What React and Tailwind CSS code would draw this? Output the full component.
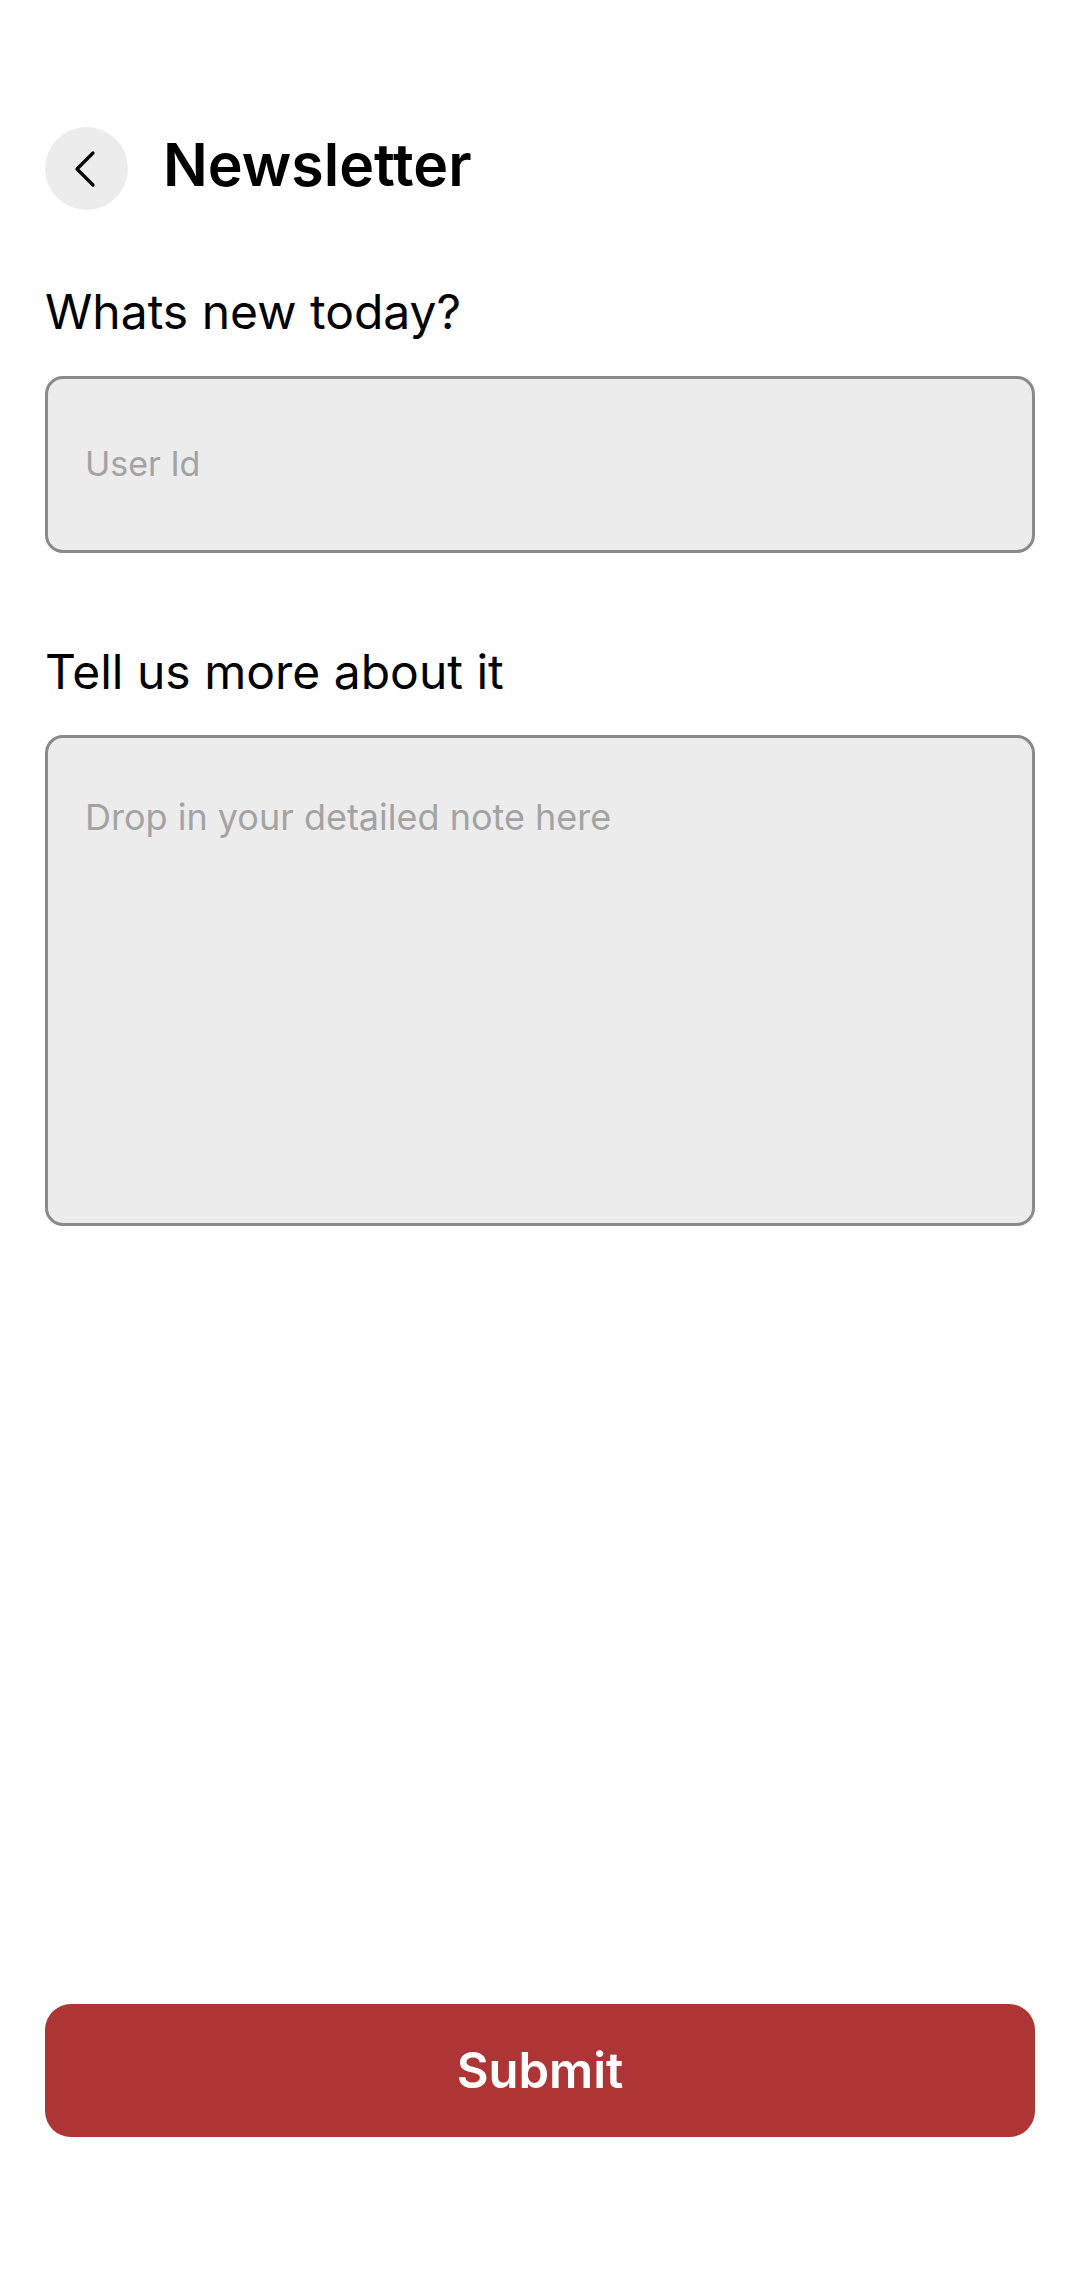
import { ChevronLeft } from 'lucide-react'

export default function App() {
  return (
    <div
      className="min-h-[2290px] w-full bg-white flex flex-col px-[45px] text-black"
      style={{ fontFamily: 'Inter, "Noto Sans", sans-serif' }}
    >
      {/* Header */}
      <div className="flex items-center gap-[35px] pt-[127px]">
        <button className="w-[83px] h-[83px] rounded-full bg-[#ececec] grid place-items-center shrink-0">
          <ChevronLeft size={64} strokeWidth={1.2} className="text-black -ml-[4px]" />
        </button>
        <h1 className="text-[59px] font-semibold leading-none -mt-[8px]">Newsletter</h1>
      </div>

      {/* Field 1 */}
      <label className="mt-[74px] text-[48px] leading-[56px]">Whats new today?</label>
      <div className="mt-[36px] h-[177px] rounded-[18px] border-[3px] border-[#8a8a8a] bg-[#ececec] flex items-center px-[37px]">
        <span className="text-[34px] text-[#a3a3a3] -mt-[3px]">User Id</span>
      </div>

      {/* Field 2 */}
      <label className="mt-[91px] text-[48px] leading-[56px]">Tell us more about it</label>
      <div className="mt-[35px] h-[491px] rounded-[18px] border-[3px] border-[#8a8a8a] bg-[#ececec] px-[37px] pt-[52px]">
        <span className="text-[36px] text-[#a3a3a3]">Drop in your detailed note here</span>
      </div>

      {/* Submit */}
      <div className="mt-auto pb-[153px]">
        <button className="w-full h-[133px] rounded-[26px] bg-[#ae3535] text-white text-[49px] font-semibold">
          Submit
        </button>
      </div>
    </div>
  )
}
